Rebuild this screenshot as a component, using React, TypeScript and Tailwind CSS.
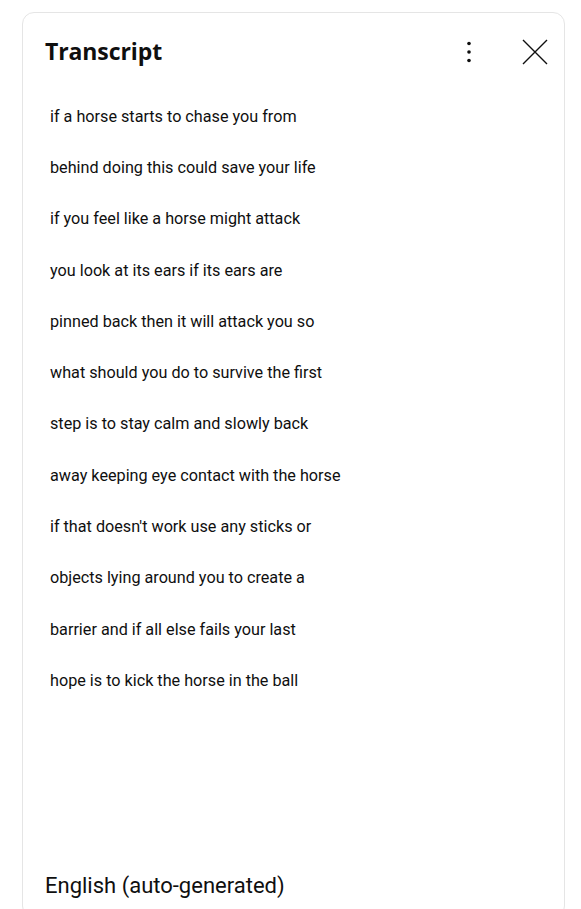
import { useState } from "react";

const lines = [
  "if a horse starts to chase you from",
  "behind doing this could save your life",
  "if you feel like a horse might attack",
  "you look at its ears if its ears are",
  "pinned back then it will attack you so",
  "what should you do to survive the first",
  "step is to stay calm and slowly back",
  "away keeping eye contact with the horse",
  "if that doesn't work use any sticks or",
  "objects lying around you to create a",
  "barrier and if all else fails your last",
  "hope is to kick the horse in the ball",
];

function MoreIcon() {
  return (
    <svg width="24" height="24" viewBox="0 0 24 24" fill="#0f0f0f">
      <circle cx="12" cy="3.5" r="1.8" />
      <circle cx="12" cy="12" r="1.8" />
      <circle cx="12" cy="20.5" r="1.8" />
    </svg>
  );
}

function CloseIcon() {
  return (
    <svg width="26" height="26" viewBox="0 0 26 26" fill="none" stroke="#0f0f0f" strokeWidth="1.4">
      <path d="M1 1 L25 25 M25 1 L1 25" />
    </svg>
  );
}

export default function App() {
  const [active, setActive] = useState<number | null>(null);

  return (
    <div className="min-h-[909px] bg-white pl-[22px] pt-3 overflow-hidden">
      <div className="w-[543px] h-[906px] box-border border border-[#e5e5e5] rounded-xl flex flex-col text-[#0f0f0f]">
        <div className="h-[78px] flex items-center justify-between pl-[22px] pr-[16px] shrink-0">
          <h2
            className="text-[23px] font-bold tracking-[-0.1px] mt-[-1px]"
            style={{ fontFamily: '"Open Sans", Lato, sans-serif' }}
          >
            Transcript
          </h2>
          <div className="flex items-center gap-[41px] mt-[-1px]">
            <button className="w-6 h-6 flex items-center justify-center">
              <MoreIcon />
            </button>
            <button className="w-[26px] h-[26px] flex items-center justify-center">
              <CloseIcon />
            </button>
          </div>
        </div>

        <div className="flex-1" style={{ fontFamily: 'Roboto, "Liberation Sans", sans-serif' }}>
          {lines.map((t, i) => (
            <div
              key={i}
              onClick={() => setActive(i)}
              className={`h-[51.33px] flex items-center pl-[27px] text-[16.2px] cursor-pointer ${
                active === i ? "bg-[#f2f2f2]" : ""
              }`}
            >
              {t}
            </div>
          ))}
        </div>

        <div
          className="h-[28px] flex items-center pl-[22px] mb-[18px] text-[22px] shrink-0"
          style={{ fontFamily: 'Roboto, "Liberation Sans", sans-serif' }}
        >
          English (auto-generated)
        </div>
      </div>
    </div>
  );
}
